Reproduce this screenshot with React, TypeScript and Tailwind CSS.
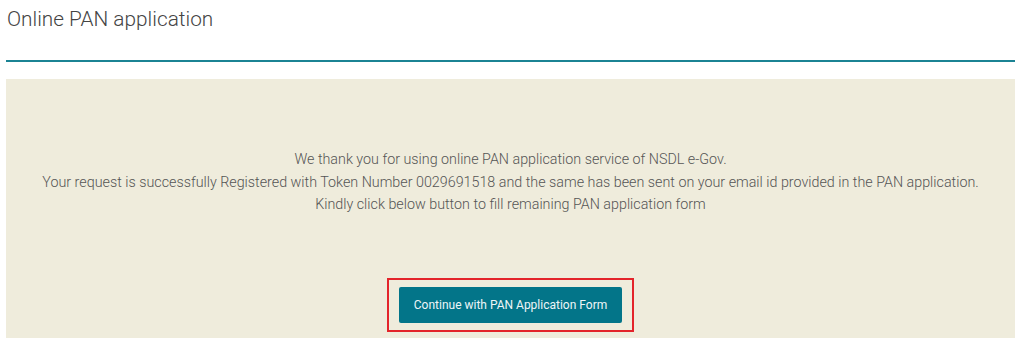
export default function App() {
  return (
    <div className="min-h-[350px] bg-white px-[6px] font-['Roboto',sans-serif] text-[#555]">
      <h1 className="pt-[5px] pl-[1px] text-[20.8px] font-light leading-[28px] text-[#444]">
        Online PAN application
      </h1>
      <div className="mt-[27px] h-[2px] w-[1009px] bg-[#1b8394]" />
      <div className="mt-[17px] flex h-[259px] w-[1009px] flex-col items-center bg-[#efecdc]">
        <div className="mt-[69px] text-center text-[14.3px] font-light leading-[22.5px] text-[#555]">
          <p>We thank you for using online PAN application service of NSDL e-Gov.</p>
          <p>
            Your request is successfully Registered with Token Number 0029691518 and the same has been
            sent on your email id provided in the PAN application.
          </p>
          <p>Kindly click below button to fill remaining PAN application form</p>
        </div>
        <div className="mt-[62px] border-2 border-[#e3242b] px-[10px] py-[7px]">
          <button className="h-[36px] w-[223px] rounded-[2px] bg-[#037589] text-[12px] text-[#eef6f8]">
            Continue with PAN Application Form
          </button>
        </div>
      </div>
    </div>
  );
}
